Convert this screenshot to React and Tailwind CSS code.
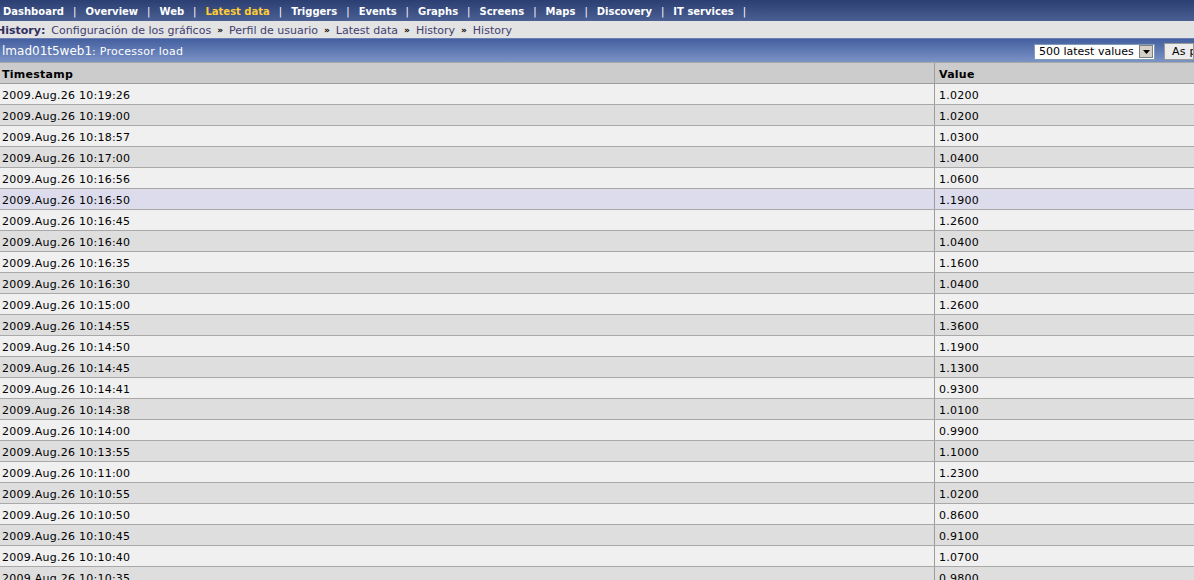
import React from "react";

const menu = [
  "Dashboard",
  "Overview",
  "Web",
  "Latest data",
  "Triggers",
  "Events",
  "Graphs",
  "Screens",
  "Maps",
  "Discovery",
  "IT services",
];

const crumbs = [
  "Configuración de los gráficos",
  "Perfil de usuario",
  "Latest data",
  "History",
  "History",
];

const history = [
  ["2009.Aug.26 10:19:26", "1.0200"],
  ["2009.Aug.26 10:19:00", "1.0200"],
  ["2009.Aug.26 10:18:57", "1.0300"],
  ["2009.Aug.26 10:17:00", "1.0400"],
  ["2009.Aug.26 10:16:56", "1.0600"],
  ["2009.Aug.26 10:16:50", "1.1900"],
  ["2009.Aug.26 10:16:45", "1.2600"],
  ["2009.Aug.26 10:16:40", "1.0400"],
  ["2009.Aug.26 10:16:35", "1.1600"],
  ["2009.Aug.26 10:16:30", "1.0400"],
  ["2009.Aug.26 10:15:00", "1.2600"],
  ["2009.Aug.26 10:14:55", "1.3600"],
  ["2009.Aug.26 10:14:50", "1.1900"],
  ["2009.Aug.26 10:14:45", "1.1300"],
  ["2009.Aug.26 10:14:41", "0.9300"],
  ["2009.Aug.26 10:14:38", "1.0100"],
  ["2009.Aug.26 10:14:00", "0.9900"],
  ["2009.Aug.26 10:13:55", "1.1000"],
  ["2009.Aug.26 10:11:00", "1.2300"],
  ["2009.Aug.26 10:10:55", "1.0200"],
  ["2009.Aug.26 10:10:50", "0.8600"],
  ["2009.Aug.26 10:10:45", "0.9100"],
  ["2009.Aug.26 10:10:40", "1.0700"],
  ["2009.Aug.26 10:10:35", "0.9800"],
];

function App() {
  const hovered = 5;

  return (
    <div className="w-[1194px] h-[580px] overflow-hidden bg-white text-[11px] leading-[13px] tracking-[0.25px] text-black font-['DejaVu_Sans',Verdana,sans-serif]">
      {/* main menu */}
      <div className="h-[21px] flex items-center pt-[2px] pl-[3px] bg-gradient-to-b from-[#2c3f72] to-[#4a5f93] text-white font-bold text-[10px] tracking-normal">
        {menu.map((m) => (
          <div key={m} className="flex items-center">
            <span className={m === "Latest data" ? "text-[#ffcc33]" : ""}>{m}</span>
            <span className="mx-[9px] font-normal text-white">|</span>
          </div>
        ))}
      </div>

      {/* breadcrumbs */}
      <div className="h-[17px] flex items-center pt-[2px] bg-[#e3e3e3] text-[#3f3f6f] tracking-normal">
        <span className="font-bold text-[#2f2f5f] ml-[-4px] mr-[6px]">History:</span>
        {crumbs.map((c, i) => (
          <span key={i} className="flex items-center">
            {i > 0 && <span className="mx-[6px] text-[9px] font-bold text-black">»</span>}
            {c}
          </span>
        ))}
      </div>

      {/* item header */}
      <div className="h-[25px] flex items-center justify-between bg-gradient-to-b from-[#44609f] to-[#7c93c6] text-white border-t border-[#6a7db0] border-b border-b-[#a8a8a8]">
        <div className="pl-[2px] pt-[1px]">
          <span className="text-[12px] tracking-normal">lmad01t5web1</span>
          <span>: Processor load</span>
        </div>
        <div className="flex items-center gap-[9px] pt-[2px]">
          <div className="h-[16px] w-[121px] flex items-center justify-between bg-white text-black pl-[4px] pr-[1px] border border-[#7f9db9] tracking-normal">
            <span>500 latest values</span>
            <span className="w-[14px] h-[13px] bg-[#d4d0c8] border border-[#808080] flex items-center justify-center">
              <svg width="7" height="4" viewBox="0 0 7 4">
                <path d="M0 0h7L3.5 4z" fill="#000" />
              </svg>
            </span>
          </div>
          <div className="h-[17px] w-[30px] flex items-center bg-[#ececec] text-black pl-[7px] border border-[#9a9a9a] whitespace-nowrap overflow-hidden">
            As p
          </div>
        </div>
      </div>

      {/* history table */}
      <div>
        <div className="flex h-[21px] bg-[#cccccc] font-bold border-b border-[#9c9c9c]">
          <div className="w-[935px] flex items-center pt-[2px] pl-[2px] border-r border-[#9c9c9c]">Timestamp</div>
          <div className="flex-1 flex items-center pt-[2px] pl-[4px]">Value</div>
        </div>
        {history.map(([ts, val], i) => (
          <div
            key={ts}
            className={`flex h-[21px] border-b border-[#a9a9a9] ${
              i === hovered ? "bg-[#dcdcec]" : i % 2 === 0 ? "bg-[#f0f0f0]" : "bg-[#dedede]"
            }`}
          >
            <div className="w-[935px] flex items-center pt-[2px] pl-[2px] border-r border-[#9c9c9c]">{ts}</div>
            <div className="flex-1 flex items-center pt-[2px] pl-[4px]">{val}</div>
          </div>
        ))}
      </div>
    </div>
  );
}

export default App;
